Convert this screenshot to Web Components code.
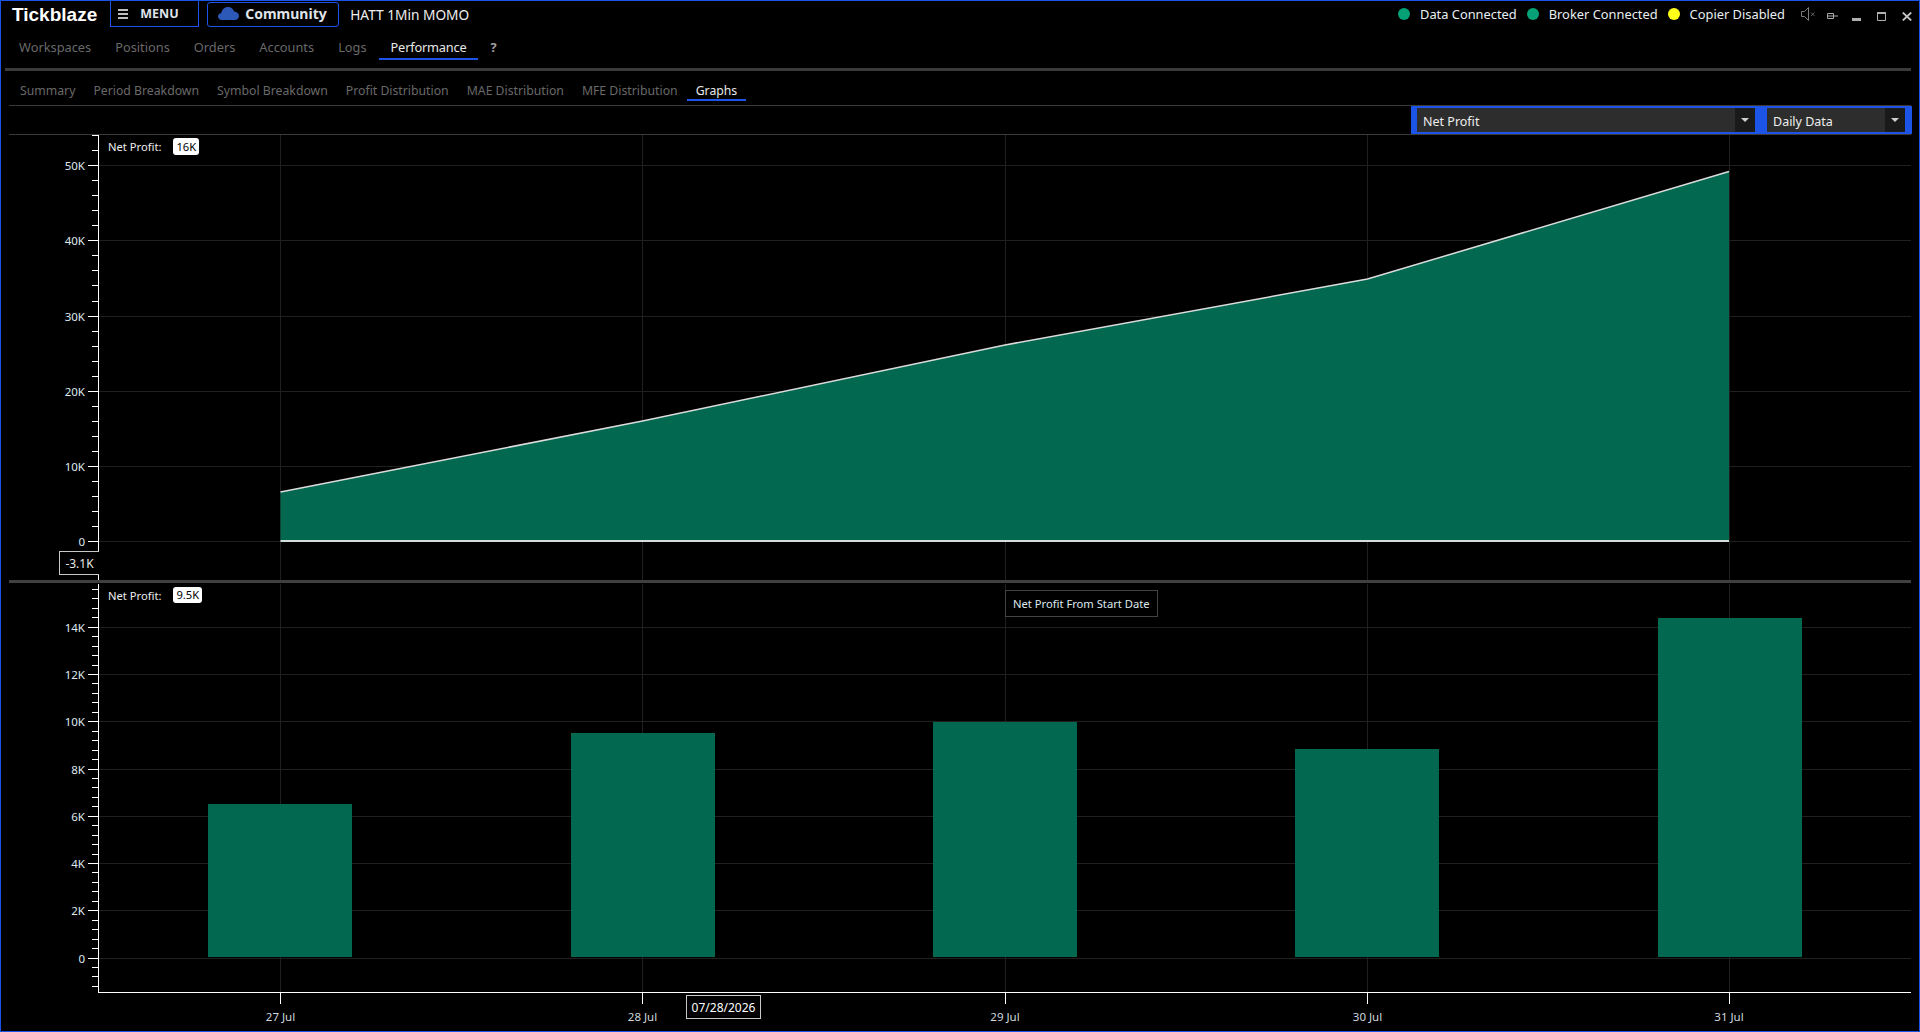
<!DOCTYPE html>
<html lang="en">
<head>
<meta charset="UTF-8">
<title>Tickblaze</title>
<style>
    html, body { margin: 0; background: #000; }
    body { font-family: "Noto Sans", "Liberation Sans", sans-serif; color: #e6e6e6; }
</style>
</head>
<body>
<tb-app>
    <tb-titlebar slot="top" workspace="HATT 1Min MOMO">
        <tb-status color="#05a177">Data Connected</tb-status>
        <tb-status color="#05a177">Broker Connected</tb-status>
        <tb-status color="#ffff1a">Copier Disabled</tb-status>
    </tb-titlebar>
    <tb-tabs slot="top" kind="main">
        <tb-tab>Workspaces</tb-tab>
        <tb-tab>Positions</tb-tab>
        <tb-tab>Orders</tb-tab>
        <tb-tab>Accounts</tb-tab>
        <tb-tab>Logs</tb-tab>
        <tb-tab active>Performance</tb-tab>
        <tb-tab help>?</tb-tab>
    </tb-tabs>
    <tb-tabs slot="top" kind="sub">
        <tb-tab>Summary</tb-tab>
        <tb-tab>Period Breakdown</tb-tab>
        <tb-tab>Symbol Breakdown</tb-tab>
        <tb-tab>Profit Distribution</tb-tab>
        <tb-tab>MAE Distribution</tb-tab>
        <tb-tab>MFE Distribution</tb-tab>
        <tb-tab active>Graphs</tb-tab>
    </tb-tabs>
    <tb-toolbar slot="top">
        <tb-combo style="width:338px">Net Profit</tb-combo>
        <tb-combo style="width:138px">Daily Data</tb-combo>
    </tb-toolbar>
    <tb-chart id="area" legend="16K"></tb-chart>
    <tb-chart id="bars" legend="9.5K" tooltip="Net Profit From Start Date"></tb-chart>
</tb-app>

<script>
    const FONT = '"Noto Sans", "Liberation Sans", sans-serif';
    const X_DAYS = [
        [280.5, '27 Jul'], [642.5, '28 Jul'], [1005, '29 Jul'], [1367.5, '30 Jul'], [1729, '31 Jul']
    ];

    class TbApp extends HTMLElement {
        constructor() {
            super();
            this.attachShadow({mode: 'open'}).innerHTML = `
                <style>
                    :host {
                        display: flex;
                        flex-direction: column;
                        box-sizing: border-box;
                        width: 1920px;
                        height: 1032px;
                        overflow: hidden;
                        background: #000;
                        border: 1px solid #1c54e8;
                    }
                </style>
                <slot name="top"></slot>
                <slot></slot>`;
        }
    }

    class TbTitlebar extends HTMLElement {
        constructor() {
            super();
            this.attachShadow({mode: 'open'}).innerHTML = `
                <style>
                    :host { display: flex; align-items: flex-start; height: 28px; font-size: 13px; }
                    .logo {
                        margin: 1px 13px 0 11px;
                        font: bold 19px/26px "Liberation Sans", sans-serif;
                        color: #fff;
                    }
                    .menu, .community {
                        display: flex;
                        align-items: center;
                        box-sizing: border-box;
                        color: #dfe3ea;
                        font-weight: 700;
                        border: 1px solid #1c54e8;
                    }
                    .menu { width: 89px; height: 26px; border-top: 0; padding-left: 7px; gap: 12px; font-size: 12.5px; }
                    .community { width: 132px; height: 25px; margin: 1px 0 0 8px; padding: 0 0 2px 10px; gap: 6px; border-radius: 3px; font-size: 14px; }
                    .name { margin: 4px 0 0 11px; font-size: 13.7px; line-height: 20px; color: #eee; }
                    .right { margin-left: auto; display: flex; align-items: flex-start; height: 27px; }
                    .status { display: flex; height: 25px; }
                    .win { display: flex; align-items: flex-start; margin: 0 7px 0 6px; }
                    svg { display: block; flex: none; }
                </style>
                <div class="logo">Tickblaze</div>
                <div class="menu">
                    <svg width="10" height="10" viewBox="0 0 10 10" fill="#bdbdbd"><rect y="0" width="10" height="2"/><rect y="4" width="10" height="2"/><rect y="8" width="10" height="2"/></svg>
                    <span>MENU</span>
                </div>
                <div class="community">
                    <svg width="21" height="13" viewBox="0 0 21 13" fill="#2c58b8"><path d="M4 13C1.6 13 0 11.5 0 9.6 0 7.7 1.3 6.4 3.2 6.2 3.8 2.7 6.5 0 10 0c3 0 5.3 1.8 6.1 4.6C18.900 4.900 21 6.700 21 9c0 2.300-1.800 4-4.200 4z"/></svg>
                    <span>Community</span>
                </div>
                <div class="name">${this.getAttribute('workspace')}</div>
                <div class="right">
                    <div class="status"><slot></slot></div>
                    <div class="win">
                        <svg style="margin-top:6px" width="15" height="14" viewBox="0 0 15 14" fill="none" stroke="#7c7c7c"><path d="M.5 4.500h3l4-4v13l-4-4h-3z"/><path d="M10 5.500l3.500 3.500M13.500 5.500L10 9" stroke-width=".8"/></svg>
                        <svg style="margin:12px 0 0 11px" width="11" height="6" viewBox="0 0 11 6" fill="none" stroke="#a8a8a8"><path d="M.5.500h6v5h-6zM0 3h11"/></svg>
                        <svg style="margin:17px 0 0 14px" width="9" height="3" viewBox="0 0 9 3" fill="#b0b0b0"><rect width="9" height="3"/></svg>
                        <svg style="margin:11px 0 0 16px" width="9" height="9" viewBox="0 0 9 9" fill="none" stroke="#b0b0b0"><path d="M.5 1.500h8v7h-8z"/><path d="M0 1h9" stroke-width="2"/></svg>
                        <svg style="margin:11px 0 0 16px" width="10" height="9" viewBox="0 0 10 9" fill="none" stroke="#c4c4c4" stroke-width="1.800"><path d="M.8.500l8.400 8M9.200.500l-8.400 8"/></svg>
                    </div>
                </div>`;
        }
    }

    class TbStatus extends HTMLElement {
        constructor() {
            super();
            this.attachShadow({mode: 'open'}).innerHTML = `
                <style>
                    :host { display: flex; align-items: center; margin-right: 10px; font-size: 12.850px; color: #e8eef2; }
                    i { width: 12px; height: 12px; margin-right: 10px; border-radius: 50%; background: ${this.getAttribute('color')}; }
                </style>
                <i></i><slot></slot>`;
        }
    }

    class TbTabs extends HTMLElement {
        constructor() {
            super();
            const main = this.getAttribute('kind') === 'main';
            this.attachShadow({mode: 'open'}).innerHTML = `
                <style>
                    :host {
                        display: flex;
                        flex: none;
                        box-sizing: border-box;
                        height: ${main ? 42 : 35}px;
                        margin: 0 ${main ? '8px 0 4px' : '8px'};
                        padding-left: 2px;
                        font-size: ${main ? 12.8 : 12.25}px;
                        border-bottom: ${main ? '3px solid #3a3a3a' : '1px solid #3a3a3a'};
                        --tab-pad: ${main ? 12 : 9}px;
                        --tab-height: ${main ? 21 : 19}px;
                        --tab-top: ${main ? 8 : 9}px;
                        --tab-track: ${main ? -.2 : 0}px;
                    }
                </style>
                <slot></slot>`;
        }
    }

    class TbTab extends HTMLElement {
        constructor() {
            super();
            this.attachShadow({mode: 'open'}).innerHTML = `
                <style>
                    :host {
                        display: block;
                        height: var(--tab-height);
                        margin-top: var(--tab-top);
                        padding: 0 var(--tab-pad);
                        line-height: 21px;
                        color: #696969;
                        border-bottom: 2px solid transparent;
                    }
                    :host([active]) { color: #e8e8e8; border-bottom-color: #1c54e8; letter-spacing: var(--tab-track); }
                    :host([help]) { color: #a0a0a0; font-weight: 700; }
                </style>
                <slot></slot>`;
        }
    }

    class TbToolbar extends HTMLElement {
        constructor() {
            super();
            this.attachShadow({mode: 'open'}).innerHTML = `
                <style>
                    :host {
                        display: flex;
                        flex: none;
                        align-self: flex-end;
                        box-sizing: border-box;
                        gap: 12px;
                        height: 28px;
                        margin-right: 7px;
                        padding: 2px 7px 2px 6px;
                        background: #1c54e8;
                    }
                </style>
                <slot></slot>`;
        }
    }

    class TbCombo extends HTMLElement {
        constructor() {
            super();
            this.attachShadow({mode: 'open'}).innerHTML = `
                <style>
                    :host {
                        display: flex;
                        box-sizing: border-box;
                        height: 24px;
                        background: #2d2d2d;
                        font-size: 12.500px;
                        line-height: 27px;
                        color: #eee;
                    }
                    .text { flex: 1; padding-left: 6px; }
                    .arrow { display: flex; align-items: center; justify-content: center; width: 20px; background: #1a1a1a; }
                    .arrow i { border: 4px solid transparent; border-top: 4px solid #d0d0d0; border-bottom: 0; }
                </style>
                <div class="text"><slot></slot></div>
                <div class="arrow"><i></i></div>`;
        }
    }

    // y0 = screen y of value 0, step = pixels per major, minor = minor ticks per major
    const CHART_SETUP = {
        area: {top: 135, height: 445, y0: 541, step: 75.15, count: 5, minor: 5, unit: 10, legendH: 17},
        bars: {top: 584, height: 447, y0: 957.5, step: 47.25, count: 7, minor: 5, unit: 2, legendH: 16}
    };

    class TbChart extends HTMLElement {
        constructor() {
            super();
            const cfg = CHART_SETUP[this.id];
            const tip = this.getAttribute('tooltip');
            this.attachShadow({mode: 'open'}).innerHTML = `
                <style>
                    :host {
                        display: block;
                        position: relative;
                        flex: none;
                        height: ${cfg.height}px;
                        margin: 0 8px;
                        font-size: 11.2px;
                    }
                    :host(#area) { border-top: 1px solid #3a3a3a; border-bottom: 3px solid #404040; }
                    :host(#bars) { margin-top: 1px; }
                    svg { display: block; }
                    text { font-family: ${FONT.replace(/"/g, "'")}; }
                    .legend { position: absolute; left: 99px; top: 3px; display: flex; align-items: center; gap: 12px; height: ${cfg.legendH}px; color: #eee; }
                    .pill { padding: 0 3px; background: #fff; color: #000; border-radius: 3px; line-height: ${cfg.legendH}px; }
                    .tip { position: absolute; left: 996px; top: 6px; box-sizing: border-box; height: 27px; padding: 0 7px; line-height: 25px; border: 1px solid #444; background: #000; color: #dfe8ec; }
                    .low { position: absolute; left: 50px; top: 416px; box-sizing: border-box; width: 40px; height: 24px; line-height: 24px; text-align: center; border: 1px solid #c8c8c8; border-right: 0; background: #000; color: #e6e6e6; font-size: 12px; }
                    .date { position: absolute; left: 677px; top: 411px; box-sizing: border-box; width: 75px; height: 24px; line-height: 24px; text-align: center; border: 1px solid #c8c8c8; background: #000; color: #fff; font-size: 12px; }
                </style>
                <svg width="1904" height="${cfg.height}" viewBox="9 ${cfg.top} 1904 ${cfg.height}">${this.drawing(cfg)}</svg>
                <div class="legend"><span>Net Profit:</span><span class="pill">${this.getAttribute('legend')}</span></div>
                ${tip ? `<div class="tip">${tip}</div>` : ''}
                ${this.id === 'area' ? '<div class="low">-3.1K</div>' : '<div class="date">07/28/2026</div>'}`;
        }

        drawing(cfg) {
            const grid = '#202020', right = 1911, fill = '#02684f';
            const bottom = this.id === 'bars' ? 992 : cfg.top + cfg.height;
            let out = '';

            X_DAYS.forEach(([x]) => {
                out += `<path d="M${Math.floor(x) + .5} ${cfg.top}V${bottom}" stroke="${grid}"/>`;
            });
            for (let i = 0; i <= cfg.count; i++) {
                const y = Math.round(cfg.y0 - i * cfg.step) + .5;
                out += `<path d="M98 ${y}H${right}" stroke="${grid}"/>`;
            }

            if (this.id === 'area') {
                const pts = '280.5,492 642.5,421 1005,345 1367.5,279 1729,171.5';
                out += `<polygon points="280.5,541 ${pts} 1729,541" fill="${fill}"/>`;
                out += `<polyline points="${pts}" fill="none" stroke="#dcdcdc" stroke-width="1.500"/>`;
                out += `<path d="M280.5 541H1729" stroke="#d4dcdc" stroke-width="2"/>`;
            } else {
                [[208, 804], [571, 733], [933, 722], [1295, 749], [1658, 618]].forEach(([x, top]) => {
                    out += `<rect x="${x}" y="${top}" width="144" height="${957 - top}" fill="${fill}"/>`;
                });
            }

            // y axis
            out += `<path d="M98.5 ${cfg.top}V${bottom}" stroke="#fff"/>`;
            const small = cfg.step / cfg.minor;
            for (let n = -Math.floor((bottom - cfg.y0) / small); ; n++) {
                const raw = cfg.y0 - n * small;
                if (raw < cfg.top) break;
                const y = Math.round(raw) + .5;
                const major = n % cfg.minor === 0 && n >= 0;
                out += `<path d="M${major ? 88 : 92} ${y}H98" stroke="#fff"/>`;
                if (major) {
                    const val = n / cfg.minor * cfg.unit;
                    out += `<text x="85" y="${y + 4}" text-anchor="end" font-size="11.500" fill="#dfe8ef">${val ? val + 'K' : 0}</text>`;
                }
            }

            // x axis, only under the lower chart
            if (this.id === 'bars') {
                out += `<path d="M98 992.500H${right}" stroke="#fff"/>`;
                X_DAYS.forEach(([x, label]) => {
                    out += `<path d="M${Math.floor(x) + .5} 992V1004" stroke="#fff"/>`;
                    out += `<text x="${x}" y="1021" text-anchor="middle" font-size="11.500" fill="#cfd8de">${label}</text>`;
                });
            }
            return out;
        }
    }

    customElements.define('tb-app', TbApp);
    customElements.define('tb-titlebar', TbTitlebar);
    customElements.define('tb-status', TbStatus);
    customElements.define('tb-tabs', TbTabs);
    customElements.define('tb-tab', TbTab);
    customElements.define('tb-toolbar', TbToolbar);
    customElements.define('tb-combo', TbCombo);
    customElements.define('tb-chart', TbChart);
</script>
</body>
</html>
